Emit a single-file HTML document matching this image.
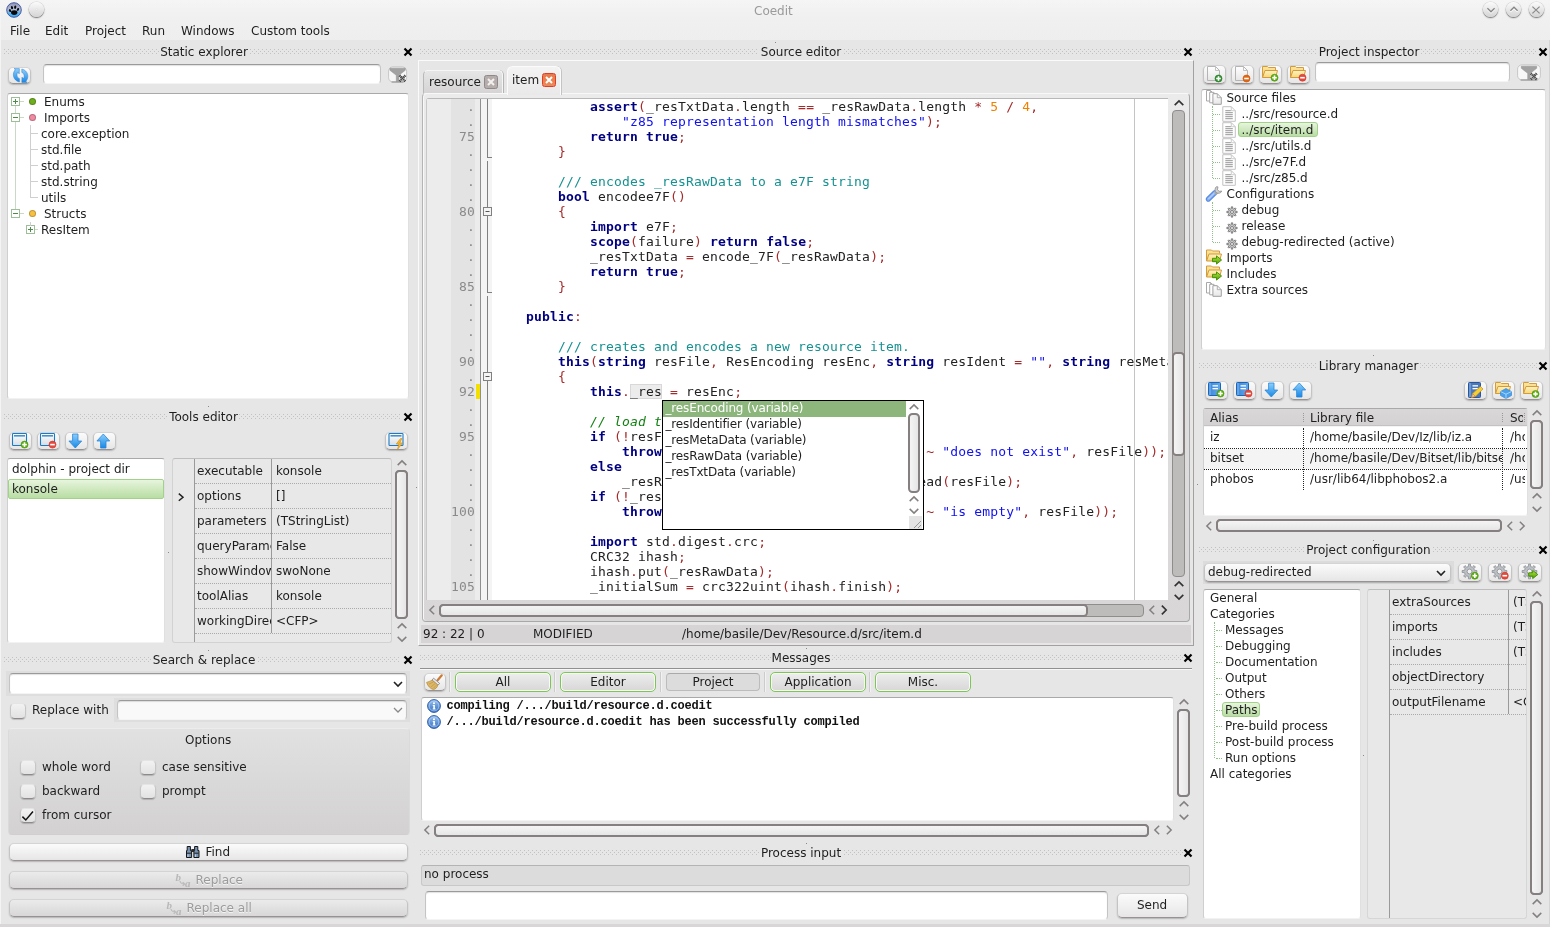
<!DOCTYPE html>
<html><head><meta charset="utf-8"><title>Coedit</title>
<style>
html,body{margin:0;padding:0}
body{width:1550px;height:927px;overflow:hidden;position:relative;background:#e6e6e6;font-family:"DejaVu Sans","Liberation Sans",sans-serif;font-size:12px;color:#1e1e1e;will-change:transform}
div,span,svg{position:absolute;box-sizing:border-box}
.t{white-space:pre;line-height:16px;height:16px}
.hd{height:16px;line-height:16px;text-align:center;white-space:pre}
.dots{height:5px;background:
 repeating-linear-gradient(90deg,#c2c2c2 0 1px,transparent 1px 4px) 0 0/100% 1px no-repeat,
 repeating-linear-gradient(90deg,#c2c2c2 0 1px,transparent 1px 4px) 2px 2px/100% 1px no-repeat,
 repeating-linear-gradient(90deg,#c2c2c2 0 1px,transparent 1px 4px) 0 4px/100% 1px no-repeat}
.white{background:#fff;border-top:1px solid #a9a9a9;border-left:1px solid #cfcfcf;border-right:1px solid #e0e0e0;border-bottom:1px solid #f2f2f2;border-radius:3px}
.inp{background:#fff;border:1px solid #c4c4c4;border-top-color:#9a9a9a;border-bottom-color:#f4f4f4;border-radius:4px;box-shadow:inset 0 1px 1px rgba(0,0,0,.12)}
.btn{border-radius:5px;background:linear-gradient(#fbfbfb,#e6e6e6);border:1px solid #c4c4c4;border-top-color:#d4d4d4;border-bottom-color:#989292;box-shadow:0 1px 1.5px rgba(0,0,0,.22)}
.sel{background:linear-gradient(#e7f5dd,#b8dda3);border:1px solid #a3d18c;border-radius:3px}
.code{font-family:"DejaVu Sans Mono","Liberation Mono",monospace;font-size:13px;letter-spacing:0.174px;white-space:pre;line-height:15px;height:15px}
.k{font-weight:bold;color:#000080}
.s{color:#a52a2a}
.n{color:#f08000}
.q{color:#1010f0}
.d{color:#169090}
.c{color:#108010;font-style:italic}
.i{color:#222}
.ln{font-family:"DejaVu Sans Mono","Liberation Mono",monospace;font-size:13px;letter-spacing:0.174px;color:#8a8a8a;text-align:right;line-height:15px;height:15px;white-space:pre}
.msg{font-family:"Liberation Mono",monospace;font-weight:bold;font-size:12px;letter-spacing:-0.2px;white-space:pre;line-height:16px;height:16px;color:#111}
.cb{border-radius:4.5px;background:linear-gradient(#f2f2f2,#e2e2e2);border:1px solid #c6c6c6;border-top-color:#e4e4e4;border-bottom-color:#8e8a8a;box-shadow:0 1px 1px rgba(0,0,0,.18)}
.sbt{background:#bebcbb;border:1px solid #908c8c;border-radius:4px}
.sbh{background:linear-gradient(90deg,#f4f4f4,#e6e6e6);border:2px solid #857f7f;border-radius:4.5px}
.sbhh{background:linear-gradient(#f4f4f4,#e6e6e6);border:2px solid #857f7f;border-radius:4.5px}
.dis{color:#9c9c9c;text-shadow:0 1px 0 #f4f4f4}
.btnd{background:linear-gradient(#ebebeb,#d9d7d7)}
</style></head>
<body>
<svg width="0" height="0" style="left:0;top:0"><defs>
<linearGradient id="gBlue" x1="0" y1="0" x2="0" y2="1"><stop offset="0" stop-color="#8fd0fb"/><stop offset="1" stop-color="#1787e6"/></linearGradient>
<linearGradient id="gFold" x1="0" y1="0" x2="0" y2="1"><stop offset="0" stop-color="#fbe7a2"/><stop offset="1" stop-color="#f3c95c"/></linearGradient>
<linearGradient id="gFoldF" x1="0" y1="0" x2="0" y2="1"><stop offset="0" stop-color="#fff3c4"/><stop offset="1" stop-color="#f7d774"/></linearGradient>
<linearGradient id="gWin" x1="0" y1="0" x2="0" y2="1"><stop offset="0" stop-color="#ffffff"/><stop offset="1" stop-color="#d8dde2"/></linearGradient>
<linearGradient id="gBook" x1="0" y1="0" x2="1" y2="0"><stop offset="0" stop-color="#3c86d8"/><stop offset="1" stop-color="#62a8ea"/></linearGradient>
<linearGradient id="gGreenA" x1="0" y1="0" x2="0" y2="1"><stop offset="0" stop-color="#b4e83c"/><stop offset="1" stop-color="#4e9a06"/></linearGradient>
<linearGradient id="gDoc" x1="0" y1="0" x2="0" y2="1"><stop offset="0" stop-color="#ffffff"/><stop offset="1" stop-color="#e6e6e6"/></linearGradient>
</defs></svg>
<div class="" style="left:0px;top:0px;width:1550px;height:40px;background:linear-gradient(#f5f5f5,#f0f0f0 45%,#eeeeee)"></div>
<div class="" style="left:0px;top:0px;width:1px;height:927px;background:#f4f4f4"></div>
<div class="" style="left:1549px;top:40px;width:1px;height:887px;background:#d4d4d4"></div>
<div class="t" style="left:754px;top:2.5px;color:#9a9a9a">Coedit</div>
<div class="" style="left:29.0px;top:2px;width:15.0px;height:15px;border-radius:50%;background:linear-gradient(#fbfbfb,#d4d4d4);box-shadow:0 1px 1.5px rgba(0,0,0,.5), 0 0 0 0.5px rgba(0,0,0,.12)"></div>
<div class="" style="left:1483.0px;top:2px;width:15.0px;height:15px;border-radius:50%;background:linear-gradient(#fbfbfb,#d4d4d4);box-shadow:0 1px 1.5px rgba(0,0,0,.5), 0 0 0 0.5px rgba(0,0,0,.12)"></div>
<div class="" style="left:1506.0px;top:2px;width:15.0px;height:15px;border-radius:50%;background:linear-gradient(#fbfbfb,#d4d4d4);box-shadow:0 1px 1.5px rgba(0,0,0,.5), 0 0 0 0.5px rgba(0,0,0,.12)"></div>
<div class="" style="left:1528.8px;top:2px;width:15.0px;height:15px;border-radius:50%;background:linear-gradient(#fbfbfb,#d4d4d4);box-shadow:0 1px 1.5px rgba(0,0,0,.5), 0 0 0 0.5px rgba(0,0,0,.12)"></div>
<svg style="left:1482.5px;top:1.8000000000000007px" width="16" height="16" viewBox="-8 -8 16 16"><path d="M-3.6 -1.8L0 1.8L3.6 -1.8" transform="translate(0,1)" stroke="#fff" stroke-width="1.3" fill="none"/><path d="M-3.6 -1.8L0 1.8L3.6 -1.8" stroke="#868686" stroke-width="1.3" fill="none"/></svg>
<svg style="left:1505.5px;top:0.9000000000000004px" width="16" height="16" viewBox="-8 -8 16 16"><path d="M-3.6 1.8L0 -1.8L3.6 1.8" transform="translate(0,1)" stroke="#fff" stroke-width="1.3" fill="none"/><path d="M-3.6 1.8L0 -1.8L3.6 1.8" stroke="#868686" stroke-width="1.3" fill="none"/></svg>
<svg style="left:1528.3px;top:1.5px" width="16" height="16" viewBox="-8 -8 16 16"><path d="M-3.6 -3.4L3.6 3.4M3.6 -3.4L-3.6 3.4" stroke="#8a8a8a" stroke-width="1.2" fill="none"/></svg>
<div class="" style="left:35.7px;top:8.9px;width:1.5999999999999943px;height:1.5999999999999996px;border-radius:50%;background:#fff;box-shadow:0 0 1px #999"></div>
<svg style="left:5.9px;top:1.7px" width="16" height="16" viewBox="0 0 16 16">
<defs><linearGradient id="pw" x1="0" y1="0" x2="0" y2="1"><stop offset="0" stop-color="#8f93b4"/><stop offset="0.45" stop-color="#b4bcd8"/><stop offset="0.75" stop-color="#58b4f0"/><stop offset="1" stop-color="#30b0fc"/></linearGradient></defs>
<circle cx="8" cy="8" r="7.3" fill="url(#pw)" stroke="#3a4f98" stroke-width="0.9"/>
<ellipse cx="8.2" cy="10.6" rx="3.2" ry="2.3" fill="#0a0a0a"/>
<ellipse cx="4" cy="8.6" rx="1.1" ry="1.5" fill="#0a0a0a" transform="rotate(-25 4 8.6)"/><ellipse cx="6" cy="5.6" rx="1.1" ry="1.7" fill="#0a0a0a" transform="rotate(-10 6 5.6)"/>
<ellipse cx="9.2" cy="5.2" rx="1.1" ry="1.7" fill="#0a0a0a" transform="rotate(8 9.2 5.2)"/><ellipse cx="12" cy="7.4" rx="1.1" ry="1.5" fill="#0a0a0a" transform="rotate(25 12 7.4)"/>
</svg>
<div class="t" style="left:10px;top:22.5px;">File</div>
<div class="t" style="left:45px;top:22.5px;">Edit</div>
<div class="t" style="left:85px;top:22.5px;">Project</div>
<div class="t" style="left:142px;top:22.5px;">Run</div>
<div class="t" style="left:181px;top:22.5px;">Windows</div>
<div class="t" style="left:251px;top:22.5px;">Custom tools</div>
<div class="dots" style="left:4px;top:49.0px;width:154.5px"></div>
<div class="dots" style="left:249.5px;top:49.0px;width:150.5px"></div>
<div class="hd" style="left:140.5px;width:127px;top:44.0px">Static explorer</div>
<svg style="left:403px;top:47.0px" width="10" height="10" viewBox="0 0 10 10"><path d="M1.5 1.5L8.5 8.5M8.5 1.5L1.5 8.5" stroke="#000" stroke-width="2.2" fill="none"/></svg>
<div class="btn" style="left:8px;top:67px;width:23px;height:17px;"></div>
<div class="inp" style="left:43px;top:64px;width:338px;height:20px;"></div>
<div class="white" style="left:7px;top:93px;width:402px;height:306px;"></div>
<div class="" style="left:15px;top:101.0px;width:9px;height:1.0px;background:#c9d9c6"></div>
<svg style="left:11px;top:97.0px" width="9" height="9" viewBox="0 0 9 9"><rect x="0.5" y="0.5" width="8" height="8" fill="#fff" stroke="#9cbf98"/><path d="M2 4.5H7M4.5 2V7" stroke="#4f8a4a" stroke-width="1"/></svg>
<div class="" style="left:29px;top:98.0px;width:7px;height:7.0px;border-radius:50%;background:#6fae1c;border:1px solid rgba(0,0,0,.22)"></div>
<div class="t" style="left:44px;top:93.5px;">Enums</div>
<div class="" style="left:15px;top:117.0px;width:9px;height:1.0px;background:#c9d9c6"></div>
<svg style="left:11px;top:113.0px" width="9" height="9" viewBox="0 0 9 9"><rect x="0.5" y="0.5" width="8" height="8" fill="#fff" stroke="#9cbf98"/><path d="M2 4.5H7" stroke="#4f8a4a" stroke-width="1"/></svg>
<div class="" style="left:29px;top:114.0px;width:7px;height:7.0px;border-radius:50%;background:#f08aa0;border:1px solid rgba(0,0,0,.22)"></div>
<div class="t" style="left:44px;top:109.5px;">Imports</div>
<div class="" style="left:30px;top:133.0px;width:8px;height:1.0px;background:#cfcfcf"></div>
<div class="t" style="left:41px;top:125.5px;">core.exception</div>
<div class="" style="left:30px;top:149.0px;width:8px;height:1.0px;background:#cfcfcf"></div>
<div class="t" style="left:41px;top:141.5px;">std.file</div>
<div class="" style="left:30px;top:165.0px;width:8px;height:1.0px;background:#cfcfcf"></div>
<div class="t" style="left:41px;top:157.5px;">std.path</div>
<div class="" style="left:30px;top:181.0px;width:8px;height:1.0px;background:#cfcfcf"></div>
<div class="t" style="left:41px;top:173.5px;">std.string</div>
<div class="" style="left:30px;top:197.0px;width:8px;height:1.0px;background:#cfcfcf"></div>
<div class="t" style="left:41px;top:189.5px;">utils</div>
<div class="" style="left:15px;top:213.0px;width:9px;height:1.0px;background:#c9d9c6"></div>
<svg style="left:11px;top:209.0px" width="9" height="9" viewBox="0 0 9 9"><rect x="0.5" y="0.5" width="8" height="8" fill="#fff" stroke="#9cbf98"/><path d="M2 4.5H7" stroke="#4f8a4a" stroke-width="1"/></svg>
<div class="" style="left:29px;top:210.0px;width:7px;height:7.0px;border-radius:50%;background:#f8c040;border:1px solid rgba(0,0,0,.22)"></div>
<div class="t" style="left:44px;top:205.5px;">Structs</div>
<div class="" style="left:30px;top:229.0px;width:8px;height:1.0px;background:#c9d9c6"></div>
<svg style="left:26px;top:225.0px" width="9" height="9" viewBox="0 0 9 9"><rect x="0.5" y="0.5" width="8" height="8" fill="#fff" stroke="#9cbf98"/><path d="M2 4.5H7M4.5 2V7" stroke="#4f8a4a" stroke-width="1"/></svg>
<div class="t" style="left:41px;top:221.5px;">ResItem</div>
<div class="" style="left:15px;top:106px;width:1px;height:7px;background:#c9d9c6"></div>
<div class="" style="left:15px;top:122px;width:1px;height:87px;background:#c9d9c6"></div>
<div class="" style="left:30px;top:125px;width:1px;height:73px;background:#cfcfcf"></div>
<div class="" style="left:30px;top:222px;width:1px;height:4px;background:#cfcfcf"></div>
<div class="dots" style="left:4px;top:414.0px;width:164.0px"></div>
<div class="dots" style="left:239.0px;top:414.0px;width:161.0px"></div>
<div class="hd" style="left:150.0px;width:107px;top:409.0px">Tools editor</div>
<svg style="left:403px;top:412.0px" width="10" height="10" viewBox="0 0 10 10"><path d="M1.5 1.5L8.5 8.5M8.5 1.5L1.5 8.5" stroke="#000" stroke-width="2.2" fill="none"/></svg>
<div class="btn" style="left:8.5px;top:431.5px;width:23.0px;height:18.5px;"></div>
<div class="btn" style="left:36.5px;top:431.5px;width:23.0px;height:18.5px;"></div>
<div class="btn" style="left:64.5px;top:431.5px;width:23.0px;height:18.5px;"></div>
<div class="btn" style="left:92.5px;top:431.5px;width:23.0px;height:18.5px;"></div>
<div class="btn" style="left:384.5px;top:431.5px;width:23.0px;height:18.5px;"></div>
<div class="white" style="left:7px;top:458px;width:158px;height:185px;"></div>
<div class="t" style="left:12px;top:460.5px;">dolphin - project dir</div>
<div class="sel" style="left:8px;top:479px;width:156px;height:20px;border-radius:2px"></div>
<div class="t" style="left:12px;top:480.5px;">konsole</div>
<div class="" style="left:172px;top:458px;width:220px;height:185px;border:1px solid #d2d2d2;border-top-color:#bdbdbd;border-radius:3px;background:#e8e8e8"></div>
<div class="" style="left:194px;top:459px;width:1px;height:183px;background:#9a9a9a"></div>
<div class="" style="left:271px;top:459px;width:1px;height:174px;background:#9a9a9a"></div>
<div class="" style="left:195px;top:459px;width:76px;height:23px;overflow:hidden"><div class="t" style="left:2px;top:3.5px">executable</div></div>
<div class="t" style="left:276px;top:462.5px;">konsole</div>
<div class="" style="left:195px;top:482.5px;width:196px;height:1.0px;border-top:1px dotted #aaa"></div>
<div class="" style="left:195px;top:484px;width:76px;height:23px;overflow:hidden"><div class="t" style="left:2px;top:3.5px">options</div></div>
<div class="t" style="left:276px;top:487.5px;">[]</div>
<div class="" style="left:195px;top:507.5px;width:196px;height:1.0px;border-top:1px dotted #aaa"></div>
<div class="" style="left:195px;top:509px;width:76px;height:23px;overflow:hidden"><div class="t" style="left:2px;top:3.5px">parameters</div></div>
<div class="t" style="left:276px;top:512.5px;">(TStringList)</div>
<div class="" style="left:195px;top:532.5px;width:196px;height:1.0px;border-top:1px dotted #aaa"></div>
<div class="" style="left:195px;top:534px;width:76px;height:23px;overflow:hidden"><div class="t" style="left:2px;top:3.5px">queryParameters</div></div>
<div class="t" style="left:276px;top:537.5px;">False</div>
<div class="" style="left:195px;top:557.5px;width:196px;height:1.0px;border-top:1px dotted #aaa"></div>
<div class="" style="left:195px;top:559px;width:76px;height:23px;overflow:hidden"><div class="t" style="left:2px;top:3.5px">showWindow</div></div>
<div class="t" style="left:276px;top:562.5px;">swoNone</div>
<div class="" style="left:195px;top:582.5px;width:196px;height:1.0px;border-top:1px dotted #aaa"></div>
<div class="" style="left:195px;top:584px;width:76px;height:23px;overflow:hidden"><div class="t" style="left:2px;top:3.5px">toolAlias</div></div>
<div class="t" style="left:276px;top:587.5px;">konsole</div>
<div class="" style="left:195px;top:607.5px;width:196px;height:1.0px;border-top:1px dotted #aaa"></div>
<div class="" style="left:195px;top:609px;width:76px;height:23px;overflow:hidden"><div class="t" style="left:2px;top:3.5px">workingDirectory</div></div>
<div class="t" style="left:276px;top:612.5px;">&lt;CFP&gt;</div>
<div class="" style="left:195px;top:632.5px;width:196px;height:1.0px;border-top:1px dotted #aaa"></div>
<svg style="left:176px;top:491px" width="10" height="12" viewBox="0 0 10 12"><path d="M2.8 2.6L7 6.2L2.8 9.8" stroke="#222" stroke-width="1.5" fill="none"/></svg>
<svg style="left:393.5px;top:455px" width="16" height="16" viewBox="-8 -8 16 16"><path d="M-4.3 2.15L0 -2.15L4.3 2.15" stroke="#858080" stroke-width="1.5" fill="none"/></svg>
<svg style="left:393.5px;top:618px" width="16" height="16" viewBox="-8 -8 16 16"><path d="M-4.3 2.15L0 -2.15L4.3 2.15" stroke="#858080" stroke-width="1.5" fill="none"/></svg>
<svg style="left:393.5px;top:630.5px" width="16" height="16" viewBox="-8 -8 16 16"><path d="M-4.3 -2.15L0 2.15L4.3 -2.15" stroke="#858080" stroke-width="1.5" fill="none"/></svg>
<div class="sbt" style="left:395px;top:470px;width:13px;height:149px;"></div>
<div class="sbh" style="left:395px;top:470px;width:13px;height:149px;"></div>
<div class="dots" style="left:4px;top:657.0px;width:146.5px"></div>
<div class="dots" style="left:257.5px;top:657.0px;width:142.5px"></div>
<div class="hd" style="left:132.5px;width:143px;top:652.0px">Search &amp; replace</div>
<svg style="left:403px;top:655.0px" width="10" height="10" viewBox="0 0 10 10"><path d="M1.5 1.5L8.5 8.5M8.5 1.5L1.5 8.5" stroke="#000" stroke-width="2.2" fill="none"/></svg>
<div class="" style="left:6px;top:671px;width:404px;height:25px;background:#dedede"></div>
<div class="" style="left:114px;top:698px;width:296px;height:24px;background:#dedede"></div>
<div class="inp" style="left:9px;top:673px;width:398px;height:21px;"></div>
<svg style="left:390px;top:676px" width="16" height="16" viewBox="-8 -8 16 16"><path d="M-4 -2.0L0 2.0L4 -2.0" stroke="#222" stroke-width="1.6" fill="none"/></svg>
<div class="cb" style="left:9.5px;top:703px;width:16.0px;height:15.5px;"></div>
<div class="t" style="left:32px;top:702.0px;">Replace with</div>
<div class="inp" style="left:117px;top:700px;width:290px;height:20px;background:#f9f9f9"></div>
<svg style="left:390px;top:702px" width="16" height="16" viewBox="-8 -8 16 16"><path d="M-4 -2.0L0 2.0L4 -2.0" stroke="#888" stroke-width="1.3" fill="none"/></svg>
<div class="" style="left:7.5px;top:727.5px;width:402.0px;height:107.5px;background:linear-gradient(#e1e1e1,#d3d1d1);border:1px solid #dadada;border-top-color:#ececec;border-bottom-color:#d0cece;border-radius:4px"></div>
<div class="t" style="left:185px;top:732.0px;">Options</div>
<div class="cb" style="left:19.5px;top:760px;width:16.0px;height:15.299999999999955px;"></div>
<div class="t" style="left:42px;top:758.5px;">whole word</div>
<div class="cb" style="left:19.5px;top:784px;width:16.0px;height:15.299999999999955px;"></div>
<div class="t" style="left:42px;top:782.5px;">backward</div>
<div class="cb" style="left:19.5px;top:808px;width:16.0px;height:15.299999999999955px;"></div>
<div class="t" style="left:42px;top:806.5px;">from cursor</div>
<svg style="left:19px;top:806.5px" width="17" height="17" viewBox="0 0 17 17"><path d="M3.4 9.6L6.8 13L14 4.6" stroke="#111" stroke-width="1.5" fill="none"/></svg>
<div class="cb" style="left:139.5px;top:760px;width:16.0px;height:15.299999999999955px;"></div>
<div class="t" style="left:162px;top:758.5px;">case sensitive</div>
<div class="cb" style="left:139.5px;top:784px;width:16.0px;height:15.299999999999955px;"></div>
<div class="t" style="left:162px;top:782.5px;">prompt</div>
<div class="btn" style="left:9px;top:843px;width:399px;height:18px;"></div>
<div class="btn btnd" style="left:9px;top:871px;width:399px;height:18px;"></div>
<div class="btn btnd" style="left:9px;top:899px;width:399px;height:18px;"></div>
<div class="t" style="left:205.5px;top:844.0px;">Find</div>
<div class="t dis" style="left:195.5px;top:872.0px;">Replace</div>
<div class="t dis" style="left:186.5px;top:900.0px;">Replace all</div>
<div class="dots" style="left:420px;top:49.0px;width:338.0px"></div>
<div class="dots" style="left:844.0px;top:49.0px;width:339.0px"></div>
<div class="hd" style="left:740.0px;width:122px;top:44.0px">Source editor</div>
<svg style="left:1183px;top:47.0px" width="10" height="10" viewBox="0 0 10 10"><path d="M1.5 1.5L8.5 8.5M8.5 1.5L1.5 8.5" stroke="#000" stroke-width="2.2" fill="none"/></svg>
<div class="" style="left:418px;top:60px;width:776px;height:586px;border:1px solid #a4a0a0;border-top-color:#fafafa;border-left-color:#fafafa"></div>
<div class="" style="left:422.5px;top:70px;width:80.5px;height:24px;background:linear-gradient(#e6e6e6,#d5d3d3);border:1px solid #f6f6f6;border-left-color:#b8b8b8;border-bottom:none;border-radius:5px 5px 0 0;box-shadow:1px 0 0 #b4b4b4"></div>
<div class="t" style="left:429px;top:73.5px;">resource</div>
<div class="" style="left:484px;top:75px;width:14px;height:14px;background:#b5adab;border:1px solid #90888a;border-radius:2.5px"></div>
<svg style="left:484px;top:75px" width="14" height="14" viewBox="0 0 14 14"><path d="M4 4L10 10M10 4L4 10" stroke="#f4f0f0" stroke-width="2" fill="none"/></svg>
<div class="" style="left:422px;top:93px;width:768px;height:529px;border:1px solid #a8a8a8;border-top-color:#f8f8f8;border-left-color:#b4b4b4;border-radius:4px;background:linear-gradient(#ebebeb,#d8d6d6);box-shadow:inset 1px 0 0 #f8f8f8"></div>
<div class="" style="left:506.5px;top:65.5px;width:54.5px;height:29.5px;background:linear-gradient(#f3f3f3,#e9e9e9);border:1.5px solid #fbfbfb;border-bottom:none;border-radius:5.5px 5.5px 0 0;box-shadow:1px 0 0 #c4c4c4"></div>
<div class="t" style="left:512px;top:71.5px;">item</div>
<div class="" style="left:542px;top:73px;width:14px;height:14px;background:linear-gradient(#e67a4c,#ea8a5a);border:1.3px solid #e03c26;border-radius:2.5px"></div>
<svg style="left:542px;top:73px" width="14" height="14" viewBox="0 0 14 14"><path d="M4 4L10 10M10 4L4 10" stroke="#fff" stroke-width="2" fill="none"/></svg>
<div class="" style="left:426px;top:98px;width:742px;height:502px;background:#fff;border-top:1px solid #b8b8b8;border-left:1px solid #c8c8c8;border-radius:3px 0 0 0;overflow:hidden"></div>
<div class="" style="left:427px;top:99px;width:54px;height:501px;background:#ececec"></div>
<div class="" style="left:451px;top:99px;width:24px;height:501px;background:#e3e3e3"></div>
<div class="" style="left:480px;top:99px;width:1px;height:501px;background:#909090"></div>
<div class="" style="left:481px;top:99px;width:11px;height:501px;background:#f4f4f4"></div>
<div class="" style="left:1134px;top:99px;width:1px;height:501px;background:#c4c4c4"></div>
<div class="" style="left:630px;top:384px;width:32px;height:15px;background:#ececec;border:1px solid #d8d8d8"></div>
<div class="" style="left:476px;top:384px;width:4px;height:15px;background:#f4e000"></div>
<div style="left:494px;top:99px;width:674px;height:501px;overflow:hidden">
<div class="code" style="left:0;top:0px">            <span class="k" style="position:static">assert</span><span class="s" style="position:static">(</span><span class="i" style="position:static">_resTxtData</span><span class="s" style="position:static">.</span><span class="i" style="position:static">length</span> <span class="s" style="position:static">=</span><span class="s" style="position:static">=</span> <span class="i" style="position:static">_resRawData</span><span class="s" style="position:static">.</span><span class="i" style="position:static">length</span> <span class="s" style="position:static">*</span> <span class="n" style="position:static">5</span> <span class="s" style="position:static">/</span> <span class="n" style="position:static">4</span><span class="s" style="position:static">,</span></div>
<div class="code" style="left:0;top:15px">                <span class="q" style="position:static">"z85 representation length mismatches"</span><span class="s" style="position:static">)</span><span class="s" style="position:static">;</span></div>
<div class="code" style="left:0;top:30px">            <span class="k" style="position:static">return</span> <span class="k" style="position:static">true</span><span class="s" style="position:static">;</span></div>
<div class="code" style="left:0;top:45px">        <span class="s" style="position:static">}</span></div>
<div class="code" style="left:0;top:60px"></div>
<div class="code" style="left:0;top:75px">        <span class="d" style="position:static">/// encodes _resRawData to a e7F string</span></div>
<div class="code" style="left:0;top:90px">        <span class="k" style="position:static">bool</span> <span class="i" style="position:static">encodee7F</span><span class="s" style="position:static">(</span><span class="s" style="position:static">)</span></div>
<div class="code" style="left:0;top:105px">        <span class="s" style="position:static">{</span></div>
<div class="code" style="left:0;top:120px">            <span class="k" style="position:static">import</span> <span class="i" style="position:static">e7F</span><span class="s" style="position:static">;</span></div>
<div class="code" style="left:0;top:135px">            <span class="k" style="position:static">scope</span><span class="s" style="position:static">(</span><span class="i" style="position:static">failure</span><span class="s" style="position:static">)</span> <span class="k" style="position:static">return</span> <span class="k" style="position:static">false</span><span class="s" style="position:static">;</span></div>
<div class="code" style="left:0;top:150px">            <span class="i" style="position:static">_resTxtData</span> <span class="s" style="position:static">=</span> <span class="i" style="position:static">encode_7F</span><span class="s" style="position:static">(</span><span class="i" style="position:static">_resRawData</span><span class="s" style="position:static">)</span><span class="s" style="position:static">;</span></div>
<div class="code" style="left:0;top:165px">            <span class="k" style="position:static">return</span> <span class="k" style="position:static">true</span><span class="s" style="position:static">;</span></div>
<div class="code" style="left:0;top:180px">        <span class="s" style="position:static">}</span></div>
<div class="code" style="left:0;top:195px"></div>
<div class="code" style="left:0;top:210px">    <span class="k" style="position:static">public</span><span class="s" style="position:static">:</span></div>
<div class="code" style="left:0;top:225px"></div>
<div class="code" style="left:0;top:240px">        <span class="d" style="position:static">/// creates and encodes a new resource item.</span></div>
<div class="code" style="left:0;top:255px">        <span class="k" style="position:static">this</span><span class="s" style="position:static">(</span><span class="k" style="position:static">string</span> <span class="i" style="position:static">resFile</span><span class="s" style="position:static">,</span> <span class="i" style="position:static">ResEncoding</span> <span class="i" style="position:static">resEnc</span><span class="s" style="position:static">,</span> <span class="k" style="position:static">string</span> <span class="i" style="position:static">resIdent</span> <span class="s" style="position:static">=</span> <span class="q" style="position:static">""</span><span class="s" style="position:static">,</span> <span class="k" style="position:static">string</span> <span class="i" style="position:static">resMetaData</span> <span class="s" style="position:static">=</span> <span class="q" style="position:static">""</span><span class="s" style="position:static">)</span></div>
<div class="code" style="left:0;top:270px">        <span class="s" style="position:static">{</span></div>
<div class="code" style="left:0;top:285px">            <span class="k" style="position:static">this</span><span class="s" style="position:static">.</span><span class="i" style="position:static">_res</span> <span class="s" style="position:static">=</span> <span class="i" style="position:static">resEnc</span><span class="s" style="position:static">;</span></div>
<div class="code" style="left:0;top:300px"></div>
<div class="code" style="left:0;top:315px">            <span class="c" style="position:static">// load the raw data</span></div>
<div class="code" style="left:0;top:330px">            <span class="k" style="position:static">if</span> <span class="s" style="position:static">(</span><span class="s" style="position:static">!</span><span class="i" style="position:static">resFile</span><span class="s" style="position:static">.</span><span class="i" style="position:static">exists</span><span class="s" style="position:static">)</span></div>
<div class="code" style="left:0;top:345px">                <span class="k" style="position:static">throw</span> <span class="k" style="position:static">new</span> <span class="i" style="position:static">Exception</span><span class="s" style="position:static">(</span><span class="i" style="position:static">format</span><span class="s" style="position:static">(</span><span class="q" style="position:static">"file %s "</span> <span class="s" style="position:static">~</span> <span class="q" style="position:static">"does not exist"</span><span class="s" style="position:static">,</span> <span class="i" style="position:static">resFile</span><span class="s" style="position:static">)</span><span class="s" style="position:static">)</span><span class="s" style="position:static">;</span></div>
<div class="code" style="left:0;top:360px">            <span class="k" style="position:static">else</span></div>
<div class="code" style="left:0;top:375px">                <span class="i" style="position:static">_resRawData</span> <span class="s" style="position:static">=</span> <span class="k" style="position:static">cast</span><span class="s" style="position:static">(</span><span class="k" style="position:static">ubyte</span><span class="s" style="position:static">[</span><span class="s" style="position:static">]</span><span class="s" style="position:static">)</span><span class="i" style="position:static">std</span><span class="s" style="position:static">.</span><span class="i" style="position:static">file</span><span class="s" style="position:static">.</span><span class="i" style="position:static">read</span><span class="s" style="position:static">(</span><span class="i" style="position:static">resFile</span><span class="s" style="position:static">)</span><span class="s" style="position:static">;</span></div>
<div class="code" style="left:0;top:390px">            <span class="k" style="position:static">if</span> <span class="s" style="position:static">(</span><span class="s" style="position:static">!</span><span class="i" style="position:static">_resRawData</span><span class="s" style="position:static">.</span><span class="i" style="position:static">length</span><span class="s" style="position:static">)</span></div>
<div class="code" style="left:0;top:405px">                <span class="k" style="position:static">throw</span> <span class="k" style="position:static">new</span> <span class="i" style="position:static">Exception</span><span class="s" style="position:static">(</span><span class="i" style="position:static">format</span><span class="s" style="position:static">(</span><span class="q" style="position:static">"file %s "</span> <span class="s" style="position:static">~</span> <span class="q" style="position:static">"is empty"</span><span class="s" style="position:static">,</span> <span class="i" style="position:static">resFile</span><span class="s" style="position:static">)</span><span class="s" style="position:static">)</span><span class="s" style="position:static">;</span></div>
<div class="code" style="left:0;top:420px"></div>
<div class="code" style="left:0;top:435px">            <span class="k" style="position:static">import</span> <span class="i" style="position:static">std</span><span class="s" style="position:static">.</span><span class="i" style="position:static">digest</span><span class="s" style="position:static">.</span><span class="i" style="position:static">crc</span><span class="s" style="position:static">;</span></div>
<div class="code" style="left:0;top:450px">            <span class="i" style="position:static">CRC32</span> <span class="i" style="position:static">ihash</span><span class="s" style="position:static">;</span></div>
<div class="code" style="left:0;top:465px">            <span class="i" style="position:static">ihash</span><span class="s" style="position:static">.</span><span class="i" style="position:static">put</span><span class="s" style="position:static">(</span><span class="i" style="position:static">_resRawData</span><span class="s" style="position:static">)</span><span class="s" style="position:static">;</span></div>
<div class="code" style="left:0;top:480px">            <span class="i" style="position:static">_initialSum</span> <span class="s" style="position:static">=</span> <span class="i" style="position:static">crc322uint</span><span class="s" style="position:static">(</span><span class="i" style="position:static">ihash</span><span class="s" style="position:static">.</span><span class="i" style="position:static">finish</span><span class="s" style="position:static">)</span><span class="s" style="position:static">;</span></div>
</div>
<div class="ln" style="left:440px;width:35px;top:99px">.</div>
<div class="ln" style="left:440px;width:35px;top:114px">.</div>
<div class="ln" style="left:440px;width:35px;top:129px">75</div>
<div class="ln" style="left:440px;width:35px;top:144px">.</div>
<div class="ln" style="left:440px;width:35px;top:159px">.</div>
<div class="ln" style="left:440px;width:35px;top:174px">.</div>
<div class="ln" style="left:440px;width:35px;top:189px">.</div>
<div class="ln" style="left:440px;width:35px;top:204px">80</div>
<div class="ln" style="left:440px;width:35px;top:219px">.</div>
<div class="ln" style="left:440px;width:35px;top:234px">.</div>
<div class="ln" style="left:440px;width:35px;top:249px">.</div>
<div class="ln" style="left:440px;width:35px;top:264px">.</div>
<div class="ln" style="left:440px;width:35px;top:279px">85</div>
<div class="ln" style="left:440px;width:35px;top:294px">.</div>
<div class="ln" style="left:440px;width:35px;top:309px">.</div>
<div class="ln" style="left:440px;width:35px;top:324px">.</div>
<div class="ln" style="left:440px;width:35px;top:339px">.</div>
<div class="ln" style="left:440px;width:35px;top:354px">90</div>
<div class="ln" style="left:440px;width:35px;top:369px">.</div>
<div class="ln" style="left:440px;width:35px;top:384px">92</div>
<div class="ln" style="left:440px;width:35px;top:399px">.</div>
<div class="ln" style="left:440px;width:35px;top:414px">.</div>
<div class="ln" style="left:440px;width:35px;top:429px">95</div>
<div class="ln" style="left:440px;width:35px;top:444px">.</div>
<div class="ln" style="left:440px;width:35px;top:459px">.</div>
<div class="ln" style="left:440px;width:35px;top:474px">.</div>
<div class="ln" style="left:440px;width:35px;top:489px">.</div>
<div class="ln" style="left:440px;width:35px;top:504px">100</div>
<div class="ln" style="left:440px;width:35px;top:519px">.</div>
<div class="ln" style="left:440px;width:35px;top:534px">.</div>
<div class="ln" style="left:440px;width:35px;top:549px">.</div>
<div class="ln" style="left:440px;width:35px;top:564px">.</div>
<div class="ln" style="left:440px;width:35px;top:579px">105</div>
<div class="" style="left:487px;top:99px;width:1px;height:59px;background:#808080"></div>
<div class="" style="left:487px;top:157px;width:5px;height:1px;background:#808080"></div>
<div class="" style="left:487px;top:161px;width:1px;height:132px;background:#808080"></div>
<div class="" style="left:487px;top:292px;width:5px;height:1px;background:#808080"></div>
<div class="" style="left:487px;top:296px;width:1px;height:304px;background:#808080"></div>
<svg style="left:483px;top:206.5px" width="10" height="10" viewBox="0 0 10 10"><rect x="0.5" y="0.5" width="8" height="8" fill="#f4f4f4" stroke="#808080"/><path d="M2.5 4.5H6.5" stroke="#555"/></svg>
<svg style="left:483px;top:371.5px" width="10" height="10" viewBox="0 0 10 10"><rect x="0.5" y="0.5" width="8" height="8" fill="#f4f4f4" stroke="#808080"/><path d="M2.5 4.5H6.5" stroke="#555"/></svg>
<svg style="left:1170.5px;top:95px" width="16" height="16" viewBox="-8 -8 16 16"><path d="M-4.3 2.15L0 -2.15L4.3 2.15" stroke="#333" stroke-width="1.65" fill="none"/></svg>
<svg style="left:1170.5px;top:576px" width="16" height="16" viewBox="-8 -8 16 16"><path d="M-4.3 2.15L0 -2.15L4.3 2.15" stroke="#333" stroke-width="1.65" fill="none"/></svg>
<svg style="left:1170.5px;top:588.5px" width="16" height="16" viewBox="-8 -8 16 16"><path d="M-4.3 -2.15L0 2.15L4.3 -2.15" stroke="#333" stroke-width="1.65" fill="none"/></svg>
<div class="sbt" style="left:1172px;top:110px;width:13px;height:467px;"></div>
<div class="sbh" style="left:1172px;top:352px;width:13px;height:104px;"></div>
<svg style="left:424px;top:602.0px" width="16" height="16" viewBox="-8 -8 16 16"><path d="M2.15 -4.3L-2.15 0L2.15 4.3" stroke="#858080" stroke-width="1.5" fill="none"/></svg>
<svg style="left:1143.5px;top:602.0px" width="16" height="16" viewBox="-8 -8 16 16"><path d="M2.15 -4.3L-2.15 0L2.15 4.3" stroke="#858080" stroke-width="1.5" fill="none"/></svg>
<svg style="left:1155.5px;top:602.0px" width="16" height="16" viewBox="-8 -8 16 16"><path d="M-2.15 -4.3L2.15 0L-2.15 4.3" stroke="#333" stroke-width="1.65" fill="none"/></svg>
<div class="sbt" style="left:439px;top:603.5px;width:705px;height:13.0px;"></div>
<div class="sbhh" style="left:439px;top:603.5px;width:649px;height:13.0px;"></div>
<div class="" style="left:421px;top:625px;width:770px;height:18px;background:#d6d4d4"></div>
<div class="t" style="left:423px;top:625.5px;">92 : 22 | 0</div>
<div class="t" style="left:533px;top:625.5px;">MODIFIED</div>
<div class="t" style="left:682px;top:625.5px;">/home/basile/Dev/Resource.d/src/item.d</div>
<div class="" style="left:662px;top:400px;width:262px;height:130px;background:#fff;border:1px solid #000"></div>
<div class="" style="left:663px;top:401px;width:243px;height:16px;background:#8cb67b"></div>
<div class="t" style="left:665.5px;top:400.0px;letter-spacing:-0.15px;color:#fff">_resEncoding (variable)</div>
<div class="t" style="left:665.5px;top:416.0px;letter-spacing:-0.15px;">_resIdentifier (variable)</div>
<div class="t" style="left:665.5px;top:432.0px;letter-spacing:-0.15px;">_resMetaData (variable)</div>
<div class="t" style="left:665.5px;top:448.0px;letter-spacing:-0.15px;">_resRawData (variable)</div>
<div class="t" style="left:665.5px;top:464.0px;letter-spacing:-0.15px;">_resTxtData (variable)</div>
<svg style="left:906px;top:399px" width="16" height="16" viewBox="-8 -8 16 16"><path d="M-4.3 2.15L0 -2.15L4.3 2.15" stroke="#858080" stroke-width="1.5" fill="none"/></svg>
<div class="sbh" style="left:908px;top:413px;width:12px;height:80px;"></div>
<svg style="left:906px;top:491px" width="16" height="16" viewBox="-8 -8 16 16"><path d="M-4.3 2.15L0 -2.15L4.3 2.15" stroke="#858080" stroke-width="1.5" fill="none"/></svg>
<svg style="left:906px;top:503px" width="16" height="16" viewBox="-8 -8 16 16"><path d="M-4.3 -2.15L0 2.15L4.3 -2.15" stroke="#858080" stroke-width="1.5" fill="none"/></svg>
<svg style="left:909px;top:516px" width="13" height="13" viewBox="0 0 13 13"><rect width="13" height="13" fill="#e4e4e4"/><path d="M12 5L5 12M12 9L9 12" stroke="#999"/></svg>
<div class="dots" style="left:420px;top:655.0px;width:350.5px"></div>
<div class="dots" style="left:831.5px;top:655.0px;width:351.5px"></div>
<div class="hd" style="left:752.5px;width:97px;top:650.0px">Messages</div>
<svg style="left:1183px;top:653.0px" width="10" height="10" viewBox="0 0 10 10"><path d="M1.5 1.5L8.5 8.5M8.5 1.5L1.5 8.5" stroke="#000" stroke-width="2.2" fill="none"/></svg>
<div class="" style="left:420px;top:668px;width:772px;height:1px;background:#909090"></div>
<div class="" style="left:420px;top:669px;width:772px;height:1px;background:#f8f8f8"></div>
<div class="btn" style="left:424px;top:672.5px;width:21.5px;height:18.5px;"></div>
<div class="" style="left:454.7px;top:671.7px;width:96.59999999999997px;height:20.59999999999991px;border:1.4px solid #7ac852;border-radius:5px;background:linear-gradient(#eeeeee,#d8d6d6);box-shadow:inset 0 0 0 1px #fafafa"></div>
<div class="hd" style="left:455px;width:96px;top:673.5px">All</div>
<div class="" style="left:559.7px;top:671.7px;width:96.59999999999991px;height:20.59999999999991px;border:1.4px solid #7ac852;border-radius:5px;background:linear-gradient(#eeeeee,#d8d6d6);box-shadow:inset 0 0 0 1px #fafafa"></div>
<div class="hd" style="left:560px;width:96px;top:673.5px">Editor</div>
<div class="" style="left:666px;top:673px;width:94px;height:18px;border:1px solid #bcbcbc;border-top-color:#aaa;border-radius:4px;background:#dcdcdc"></div>
<div class="hd" style="left:666px;width:94px;top:673.5px">Project</div>
<div class="" style="left:769.7px;top:671.7px;width:96.59999999999991px;height:20.59999999999991px;border:1.4px solid #7ac852;border-radius:5px;background:linear-gradient(#eeeeee,#d8d6d6);box-shadow:inset 0 0 0 1px #fafafa"></div>
<div class="hd" style="left:770px;width:96px;top:673.5px">Application</div>
<div class="" style="left:874.7px;top:671.7px;width:96.59999999999991px;height:20.59999999999991px;border:1.4px solid #7ac852;border-radius:5px;background:linear-gradient(#eeeeee,#d8d6d6);box-shadow:inset 0 0 0 1px #fafafa"></div>
<div class="hd" style="left:875px;width:96px;top:673.5px">Misc.</div>
<div class="" style="left:449px;top:672px;width:1px;height:20px;background:#cccccc"></div>
<div class="" style="left:450px;top:672px;width:1px;height:20px;background:#f2f2f2"></div>
<div class="" style="left:554px;top:672px;width:1px;height:20px;background:#cccccc"></div>
<div class="" style="left:555px;top:672px;width:1px;height:20px;background:#f2f2f2"></div>
<div class="" style="left:659.5px;top:672px;width:1.0px;height:20px;background:#cccccc"></div>
<div class="" style="left:660.5px;top:672px;width:1.0px;height:20px;background:#f2f2f2"></div>
<div class="" style="left:764px;top:672px;width:1px;height:20px;background:#cccccc"></div>
<div class="" style="left:765px;top:672px;width:1px;height:20px;background:#f2f2f2"></div>
<div class="" style="left:869px;top:672px;width:1px;height:20px;background:#cccccc"></div>
<div class="" style="left:870px;top:672px;width:1px;height:20px;background:#f2f2f2"></div>
<div class="white" style="left:421px;top:697px;width:753px;height:124px;"></div>
<svg style="left:427px;top:699px" width="14" height="14" viewBox="0 0 14 14"><defs><linearGradient id="ig" x1="0" y1="0" x2="0" y2="1"><stop offset="0" stop-color="#9cc4f0"/><stop offset="1" stop-color="#2f6cc0"/></linearGradient></defs><circle cx="7" cy="7" r="6.4" fill="url(#ig)" stroke="#2f5fae" stroke-width="1"/><circle cx="7" cy="7" r="4.9" fill="none" stroke="#b9d3f2" stroke-width="0.7"/><path d="M5.8 6H7.9V9.6H8.6V10.6H5.6V9.6H6.3V7H5.8Z" fill="#fff"/><circle cx="7" cy="4.2" r="1.05" fill="#fff"/></svg>
<svg style="left:427px;top:715px" width="14" height="14" viewBox="0 0 14 14"><defs><linearGradient id="ig" x1="0" y1="0" x2="0" y2="1"><stop offset="0" stop-color="#9cc4f0"/><stop offset="1" stop-color="#2f6cc0"/></linearGradient></defs><circle cx="7" cy="7" r="6.4" fill="url(#ig)" stroke="#2f5fae" stroke-width="1"/><circle cx="7" cy="7" r="4.9" fill="none" stroke="#b9d3f2" stroke-width="0.7"/><path d="M5.8 6H7.9V9.6H8.6V10.6H5.6V9.6H6.3V7H5.8Z" fill="#fff"/><circle cx="7" cy="4.2" r="1.05" fill="#fff"/></svg>
<div class="msg" style="left:446.5px;top:697.5px;">compiling /.../build/resource.d.coedit</div>
<div class="msg" style="left:446.5px;top:713.5px;">/.../build/resource.d.coedit has been successfully compiled</div>
<svg style="left:1175.5px;top:694px" width="16" height="16" viewBox="-8 -8 16 16"><path d="M-4.3 2.15L0 -2.15L4.3 2.15" stroke="#858080" stroke-width="1.5" fill="none"/></svg>
<svg style="left:1175.5px;top:796px" width="16" height="16" viewBox="-8 -8 16 16"><path d="M-4.3 2.15L0 -2.15L4.3 2.15" stroke="#858080" stroke-width="1.5" fill="none"/></svg>
<svg style="left:1175.5px;top:808.5px" width="16" height="16" viewBox="-8 -8 16 16"><path d="M-4.3 -2.15L0 2.15L4.3 -2.15" stroke="#858080" stroke-width="1.5" fill="none"/></svg>
<div class="sbt" style="left:1177px;top:709px;width:13px;height:88px;"></div>
<div class="sbh" style="left:1177px;top:709px;width:13px;height:88px;"></div>
<svg style="left:419px;top:822.0px" width="16" height="16" viewBox="-8 -8 16 16"><path d="M2.15 -4.3L-2.15 0L2.15 4.3" stroke="#858080" stroke-width="1.5" fill="none"/></svg>
<svg style="left:1148.5px;top:822.0px" width="16" height="16" viewBox="-8 -8 16 16"><path d="M2.15 -4.3L-2.15 0L2.15 4.3" stroke="#858080" stroke-width="1.5" fill="none"/></svg>
<svg style="left:1160.5px;top:822.0px" width="16" height="16" viewBox="-8 -8 16 16"><path d="M-2.15 -4.3L2.15 0L-2.15 4.3" stroke="#858080" stroke-width="1.5" fill="none"/></svg>
<div class="sbt" style="left:434px;top:823.5px;width:715px;height:13.0px;"></div>
<div class="sbhh" style="left:434px;top:823.5px;width:715px;height:13.0px;"></div>
<div class="dots" style="left:420px;top:850.0px;width:338.5px"></div>
<div class="dots" style="left:843.5px;top:850.0px;width:339.5px"></div>
<div class="hd" style="left:740.5px;width:121px;top:845.0px">Process input</div>
<svg style="left:1183px;top:848.0px" width="10" height="10" viewBox="0 0 10 10"><path d="M1.5 1.5L8.5 8.5M8.5 1.5L1.5 8.5" stroke="#000" stroke-width="2.2" fill="none"/></svg>
<div class="" style="left:421px;top:865px;width:769px;height:21px;background:#dcdcdc;border:1px solid #c8c8c8;border-top-color:#b4b4b4;border-radius:3px"></div>
<div class="t" style="left:424px;top:866.0px;">no process</div>
<div class="inp" style="left:425px;top:891px;width:683px;height:29px;"></div>
<div class="btn" style="left:1117px;top:893px;width:71px;height:25px;"></div>
<div class="t" style="left:1137px;top:897.0px;">Send</div>
<div class="dots" style="left:1199px;top:49.0px;width:117.75px"></div>
<div class="dots" style="left:1421.25px;top:49.0px;width:115.75px"></div>
<div class="hd" style="left:1298.75px;width:140.5px;top:44.0px">Project inspector</div>
<svg style="left:1537.5px;top:47.0px" width="10" height="10" viewBox="0 0 10 10"><path d="M1.5 1.5L8.5 8.5M8.5 1.5L1.5 8.5" stroke="#000" stroke-width="2.2" fill="none"/></svg>
<div class="btn" style="left:1202.5px;top:64.5px;width:23.0px;height:19.0px;"></div>
<div class="btn" style="left:1230.5px;top:64.5px;width:23.0px;height:19.0px;"></div>
<div class="btn" style="left:1258.5px;top:64.5px;width:23.0px;height:19.0px;"></div>
<div class="btn" style="left:1286.5px;top:64.5px;width:23.0px;height:19.0px;"></div>
<div class="inp" style="left:1315px;top:62px;width:195px;height:20px;"></div>
<div class="white" style="left:1201px;top:89px;width:345px;height:261px;"></div>
<div class="t" style="left:1226.5px;top:89.5px;">Source files</div>
<div class="t" style="left:1241.5px;top:105.5px;">../src/resource.d</div>
<div class="" style="left:1213px;top:114.0px;width:7px;height:1.0px;border-top:1px dotted #8fc08a"></div>
<div class="sel" style="left:1238px;top:122.0px;width:80px;height:15.0px;"></div>
<div class="t" style="left:1241.5px;top:121.5px;">../src/item.d</div>
<div class="" style="left:1213px;top:130.0px;width:7px;height:1.0px;border-top:1px dotted #8fc08a"></div>
<div class="t" style="left:1241.5px;top:137.5px;">../src/utils.d</div>
<div class="" style="left:1213px;top:146.0px;width:7px;height:1.0px;border-top:1px dotted #8fc08a"></div>
<div class="t" style="left:1241.5px;top:153.5px;">../src/e7F.d</div>
<div class="" style="left:1213px;top:162.0px;width:7px;height:1.0px;border-top:1px dotted #8fc08a"></div>
<div class="t" style="left:1241.5px;top:169.5px;">../src/z85.d</div>
<div class="" style="left:1213px;top:178.0px;width:7px;height:1.0px;border-top:1px dotted #8fc08a"></div>
<div class="t" style="left:1226.5px;top:185.5px;">Configurations</div>
<div class="t" style="left:1241.5px;top:201.5px;">debug</div>
<div class="" style="left:1213px;top:210.0px;width:7px;height:1.0px;border-top:1px dotted #8fc08a"></div>
<div class="t" style="left:1241.5px;top:217.5px;">release</div>
<div class="" style="left:1213px;top:226.0px;width:7px;height:1.0px;border-top:1px dotted #8fc08a"></div>
<div class="t" style="left:1241.5px;top:233.5px;">debug-redirected (active)</div>
<div class="" style="left:1213px;top:242.0px;width:7px;height:1.0px;border-top:1px dotted #8fc08a"></div>
<div class="t" style="left:1226.5px;top:249.5px;">Imports</div>
<div class="t" style="left:1226.5px;top:265.5px;">Includes</div>
<div class="t" style="left:1226.5px;top:281.5px;">Extra sources</div>
<div class="" style="left:1212px;top:106px;width:1px;height:72px;border-left:1px dotted #8fc08a"></div>
<div class="" style="left:1212px;top:202px;width:1px;height:40px;border-left:1px dotted #8fc08a"></div>
<div class="dots" style="left:1199px;top:363.0px;width:117.75px"></div>
<div class="dots" style="left:1420.25px;top:363.0px;width:116.75px"></div>
<div class="hd" style="left:1298.75px;width:139.5px;top:358.0px">Library manager</div>
<svg style="left:1537.5px;top:361.0px" width="10" height="10" viewBox="0 0 10 10"><path d="M1.5 1.5L8.5 8.5M8.5 1.5L1.5 8.5" stroke="#000" stroke-width="2.2" fill="none"/></svg>
<div class="btn" style="left:1204.5px;top:381px;width:23.0px;height:18.5px;"></div>
<div class="btn" style="left:1232.5px;top:381px;width:23.0px;height:18.5px;"></div>
<div class="btn" style="left:1260.5px;top:381px;width:23.0px;height:18.5px;"></div>
<div class="btn" style="left:1288.5px;top:381px;width:23.0px;height:18.5px;"></div>
<div class="btn" style="left:1463.5px;top:381px;width:23.0px;height:18.5px;"></div>
<div class="btn" style="left:1491.5px;top:381px;width:23.0px;height:18.5px;"></div>
<div class="btn" style="left:1519.5px;top:381px;width:23.0px;height:18.5px;"></div>
<div class="white" style="left:1203px;top:408px;width:325px;height:108px;overflow:hidden"></div>
<div class="" style="left:1204px;top:409px;width:323px;height:18px;background:linear-gradient(#d9d7d7,#d3d1d1);border-bottom:1px solid #f4f4f4;box-shadow:inset 0 -2px 0 -1px #c4c2c2"></div>
<div class="t" style="left:1210px;top:409.5px;">Alias</div>
<div class="t" style="left:1310px;top:409.5px;">Library file</div>
<div class="" style="left:1503px;top:409px;width:20px;height:17px;overflow:hidden"><div class="t" style="left:7px;top:0.5px">So</div></div>
<div class="" style="left:1204px;top:449px;width:323px;height:20px;background:#f5f4f4"></div>
<div class="t" style="left:1210px;top:429.0px;">iz</div>
<div class="" style="left:1304px;top:427px;width:198px;height:20px;overflow:hidden"><div class="t" style="left:6px;top:2px">/home/basile/Dev/Iz/lib/iz.a</div></div>
<div class="" style="left:1503px;top:427px;width:22px;height:20px;overflow:hidden"><div class="t" style="left:7px;top:2px">/home</div></div>
<div class="" style="left:1204px;top:448px;width:323px;height:1px;border-top:1px dotted #222"></div>
<div class="t" style="left:1210px;top:450.0px;">bitset</div>
<div class="" style="left:1304px;top:448px;width:198px;height:20px;overflow:hidden"><div class="t" style="left:6px;top:2px">/home/basile/Dev/Bitset/lib/bitset.a</div></div>
<div class="" style="left:1503px;top:448px;width:22px;height:20px;overflow:hidden"><div class="t" style="left:7px;top:2px">/home</div></div>
<div class="" style="left:1204px;top:469px;width:323px;height:1px;border-top:1px dotted #222"></div>
<div class="t" style="left:1210px;top:471.0px;">phobos</div>
<div class="" style="left:1304px;top:469px;width:198px;height:20px;overflow:hidden"><div class="t" style="left:6px;top:2px">/usr/lib64/libphobos2.a</div></div>
<div class="" style="left:1503px;top:469px;width:22px;height:20px;overflow:hidden"><div class="t" style="left:7px;top:2px">/usr</div></div>
<div class="" style="left:1303px;top:428px;width:1px;height:62px;border-left:1px dotted #222"></div>
<div class="" style="left:1502px;top:428px;width:1px;height:62px;border-left:1px dotted #222"></div>
<div class="" style="left:1303px;top:413px;width:1px;height:9px;border-left:1px dotted #999"></div>
<div class="" style="left:1502px;top:413px;width:1px;height:9px;border-left:1px dotted #999"></div>
<div class="" style="left:1524px;top:413px;width:1px;height:9px;border-left:1px dotted #999"></div>
<svg style="left:1528.5px;top:405px" width="16" height="16" viewBox="-8 -8 16 16"><path d="M-4.3 2.15L0 -2.15L4.3 2.15" stroke="#858080" stroke-width="1.5" fill="none"/></svg>
<svg style="left:1528.5px;top:488px" width="16" height="16" viewBox="-8 -8 16 16"><path d="M-4.3 2.15L0 -2.15L4.3 2.15" stroke="#858080" stroke-width="1.5" fill="none"/></svg>
<svg style="left:1528.5px;top:500.5px" width="16" height="16" viewBox="-8 -8 16 16"><path d="M-4.3 -2.15L0 2.15L4.3 -2.15" stroke="#858080" stroke-width="1.5" fill="none"/></svg>
<div class="sbt" style="left:1530px;top:420px;width:13px;height:69px;"></div>
<div class="sbh" style="left:1530px;top:420px;width:13px;height:69px;"></div>
<svg style="left:1201px;top:517.5px" width="16" height="16" viewBox="-8 -8 16 16"><path d="M2.15 -4.3L-2.15 0L2.15 4.3" stroke="#858080" stroke-width="1.5" fill="none"/></svg>
<svg style="left:1501.5px;top:517.5px" width="16" height="16" viewBox="-8 -8 16 16"><path d="M2.15 -4.3L-2.15 0L2.15 4.3" stroke="#858080" stroke-width="1.5" fill="none"/></svg>
<svg style="left:1513.5px;top:517.5px" width="16" height="16" viewBox="-8 -8 16 16"><path d="M-2.15 -4.3L2.15 0L-2.15 4.3" stroke="#858080" stroke-width="1.5" fill="none"/></svg>
<div class="sbt" style="left:1216px;top:519px;width:286px;height:13px;"></div>
<div class="sbhh" style="left:1216px;top:519px;width:286px;height:13px;"></div>
<div class="dots" style="left:1199px;top:547.0px;width:105.0px"></div>
<div class="dots" style="left:1433.0px;top:547.0px;width:104.0px"></div>
<div class="hd" style="left:1286.0px;width:165px;top:542.0px">Project configuration</div>
<svg style="left:1537.5px;top:545.0px" width="10" height="10" viewBox="0 0 10 10"><path d="M1.5 1.5L8.5 8.5M8.5 1.5L1.5 8.5" stroke="#000" stroke-width="2.2" fill="none"/></svg>
<div class="" style="left:1203px;top:561px;width:251px;height:23px;background:#dcdcdc"></div>
<div class="btn" style="left:1204px;top:563px;width:247px;height:18.5px;"></div>
<div class="t" style="left:1208px;top:563.5px;">debug-redirected</div>
<svg style="left:1433px;top:565px" width="16" height="16" viewBox="-8 -8 16 16"><path d="M-4 -2.0L0 2.0L4 -2.0" stroke="#222" stroke-width="1.6" fill="none"/></svg>
<div class="btn" style="left:1458px;top:562.5px;width:24px;height:19.0px;"></div>
<div class="btn" style="left:1488px;top:562.5px;width:24px;height:19.0px;"></div>
<div class="btn" style="left:1518px;top:562.5px;width:24px;height:19.0px;"></div>
<div class="white" style="left:1203px;top:589px;width:158px;height:330px;"></div>
<div class="t" style="left:1210px;top:589.5px;">General</div>
<div class="t" style="left:1210px;top:605.5px;">Categories</div>
<div class="t" style="left:1225px;top:621.5px;">Messages</div>
<div class="" style="left:1216px;top:630.0px;width:6px;height:1.0px;border-top:1px dotted #8fc08a"></div>
<div class="t" style="left:1225px;top:637.5px;">Debugging</div>
<div class="" style="left:1216px;top:646.0px;width:6px;height:1.0px;border-top:1px dotted #8fc08a"></div>
<div class="t" style="left:1225px;top:653.5px;">Documentation</div>
<div class="" style="left:1216px;top:662.0px;width:6px;height:1.0px;border-top:1px dotted #8fc08a"></div>
<div class="t" style="left:1225px;top:669.5px;">Output</div>
<div class="" style="left:1216px;top:678.0px;width:6px;height:1.0px;border-top:1px dotted #8fc08a"></div>
<div class="t" style="left:1225px;top:685.5px;">Others</div>
<div class="" style="left:1216px;top:694.0px;width:6px;height:1.0px;border-top:1px dotted #8fc08a"></div>
<div class="sel" style="left:1222px;top:702.0px;width:38px;height:15.0px;"></div>
<div class="t" style="left:1225px;top:701.5px;">Paths</div>
<div class="" style="left:1216px;top:710.0px;width:6px;height:1.0px;border-top:1px dotted #8fc08a"></div>
<div class="t" style="left:1225px;top:717.5px;">Pre-build process</div>
<div class="" style="left:1216px;top:726.0px;width:6px;height:1.0px;border-top:1px dotted #8fc08a"></div>
<div class="t" style="left:1225px;top:733.5px;">Post-build process</div>
<div class="" style="left:1216px;top:742.0px;width:6px;height:1.0px;border-top:1px dotted #8fc08a"></div>
<div class="t" style="left:1225px;top:749.5px;">Run options</div>
<div class="" style="left:1216px;top:758.0px;width:6px;height:1.0px;border-top:1px dotted #8fc08a"></div>
<div class="t" style="left:1210px;top:765.5px;">All categories</div>
<div class="" style="left:1214px;top:622px;width:1px;height:136px;border-left:1px dotted #8fc08a"></div>
<div class="" style="left:1367px;top:589px;width:160px;height:330px;border:1px solid #d6d6d6;border-top-color:#bdbdbd;border-radius:3px;background:#e8e8e8"></div>
<div class="" style="left:1389px;top:590px;width:1px;height:328px;background:#9a9a9a"></div>
<div class="" style="left:1508px;top:590px;width:1px;height:124px;background:#9a9a9a"></div>
<div class="t" style="left:1392px;top:593.5px;">extraSources</div>
<div class="" style="left:1509px;top:590px;width:17px;height:23px;overflow:hidden"><div class="t" style="left:4px;top:3.5px">(TS</div></div>
<div class="" style="left:1390px;top:613.5px;width:136px;height:1.0px;border-top:1px dotted #aaa"></div>
<div class="t" style="left:1392px;top:618.5px;">imports</div>
<div class="" style="left:1509px;top:615px;width:17px;height:23px;overflow:hidden"><div class="t" style="left:4px;top:3.5px">(TS</div></div>
<div class="" style="left:1390px;top:638.5px;width:136px;height:1.0px;border-top:1px dotted #aaa"></div>
<div class="t" style="left:1392px;top:643.5px;">includes</div>
<div class="" style="left:1509px;top:640px;width:17px;height:23px;overflow:hidden"><div class="t" style="left:4px;top:3.5px">(TS</div></div>
<div class="" style="left:1390px;top:663.5px;width:136px;height:1.0px;border-top:1px dotted #aaa"></div>
<div class="t" style="left:1392px;top:668.5px;">objectDirectory</div>
<div class="" style="left:1509px;top:665px;width:17px;height:23px;overflow:hidden"><div class="t" style="left:4px;top:3.5px"></div></div>
<div class="" style="left:1390px;top:688.5px;width:136px;height:1.0px;border-top:1px dotted #aaa"></div>
<div class="t" style="left:1392px;top:693.5px;">outputFilename</div>
<div class="" style="left:1509px;top:690px;width:17px;height:23px;overflow:hidden"><div class="t" style="left:4px;top:3.5px">&lt;CF</div></div>
<div class="" style="left:1390px;top:713.5px;width:136px;height:1.0px;border-top:1px dotted #aaa"></div>
<svg style="left:1528.5px;top:586px" width="16" height="16" viewBox="-8 -8 16 16"><path d="M-4.3 2.15L0 -2.15L4.3 2.15" stroke="#858080" stroke-width="1.5" fill="none"/></svg>
<svg style="left:1528.5px;top:894px" width="16" height="16" viewBox="-8 -8 16 16"><path d="M-4.3 2.15L0 -2.15L4.3 2.15" stroke="#858080" stroke-width="1.5" fill="none"/></svg>
<svg style="left:1528.5px;top:906.5px" width="16" height="16" viewBox="-8 -8 16 16"><path d="M-4.3 -2.15L0 2.15L4.3 -2.15" stroke="#858080" stroke-width="1.5" fill="none"/></svg>
<div class="sbt" style="left:1530px;top:601px;width:13px;height:294px;"></div>
<div class="sbh" style="left:1530px;top:601px;width:13px;height:294px;"></div>
<div class="" style="left:0px;top:924px;width:1550px;height:3px;background:#d8d6d6"></div>
<div class="" style="left:208px;top:406px;width:1px;height:1px;background:#8a8a8a"></div>
<div class="" style="left:208px;top:650px;width:1px;height:1px;background:#8a8a8a"></div>
<div class="" style="left:168px;top:552px;width:1px;height:1px;background:#8a8a8a"></div>
<div class="" style="left:416px;top:487px;width:1px;height:1px;background:#8a8a8a"></div>
<div class="" style="left:1373px;top:355px;width:1px;height:1px;background:#8a8a8a"></div>
<div class="" style="left:1373px;top:540px;width:1px;height:1px;background:#8a8a8a"></div>
<div class="" style="left:1197px;top:484px;width:1px;height:1px;background:#8a8a8a"></div>
<div class="" style="left:1363px;top:755px;width:1px;height:1px;background:#8a8a8a"></div>
<div class="" style="left:806px;top:648px;width:1px;height:1px;background:#8a8a8a"></div>
<div class="" style="left:806px;top:843px;width:1px;height:1px;background:#8a8a8a"></div>
<div class="" style="left:775px;top:42px;width:1px;height:1px;background:#8a8a8a"></div>
<svg style="left:0;top:0" width="1550" height="927" viewBox="0 0 1550 927"><g fill="url(#gBlue)" stroke="#2f7fd0" stroke-width="0.5"><path d="M19.4 82C13.2 80.6 11.6 73.6 15.4 69.6L14 68.6L19.4 68.6L19.2 73.8L17.8 72.4C16.2 74.6 17 77.6 19.4 78.6Z"/><path d="M21.8 69C28 70.4 29.6 77.4 25.8 81.4L27.2 82.4L21.8 82.4L22 77.2L23.4 78.6C25 76.4 24.2 73.4 21.8 72.4Z"/></g><rect x="388.6" y="66.9" width="18" height="15" rx="4.2" fill="#f7f7f7" stroke="#bcbcbc" stroke-width="0.8"/><path d="M391.6 82.0H403.6" stroke="#8e8888" stroke-width="1"/><path d="M389.90000000000003 68.2H405.3V70.30000000000001L398.90000000000003 75.30000000000001V81.5H396.3V75.30000000000001L389.90000000000003 70.30000000000001Z" fill="#a2a2a2" stroke="#909090" stroke-width="0.5"/><path d="M399.50000000000006 75.5L405.3 81.30000000000001M405.3 75.5L399.50000000000006 81.30000000000001" stroke="#2a2a2a" stroke-width="2.6" stroke-dasharray="0.9 0.9" opacity="0.95"/><path d="M399.50000000000006 75.5L405.3 81.30000000000001M405.3 75.5L399.50000000000006 81.30000000000001" stroke="#555" stroke-width="1.6" opacity="0.55"/><rect x="1517.6" y="64.9" width="22.8" height="15" rx="4.2" fill="#f7f7f7" stroke="#bcbcbc" stroke-width="0.8"/><path d="M1520.6 80.0H1537.3999999999999" stroke="#8e8888" stroke-width="1"/><path d="M1521.3 66.2H1536.7V68.30000000000001L1530.3 73.30000000000001V79.5H1527.7V73.30000000000001L1521.3 68.30000000000001Z" fill="#a2a2a2" stroke="#909090" stroke-width="0.5"/><path d="M1530.8999999999999 73.5L1536.7 79.30000000000001M1536.7 73.5L1530.8999999999999 79.30000000000001" stroke="#2a2a2a" stroke-width="2.6" stroke-dasharray="0.9 0.9" opacity="0.95"/><path d="M1530.8999999999999 73.5L1536.7 79.30000000000001M1536.7 73.5L1530.8999999999999 79.30000000000001" stroke="#555" stroke-width="1.6" opacity="0.55"/><rect x="12.5" y="433.5" width="14" height="12" rx="0.8" fill="url(#gWin)" stroke="#1c7ac4" stroke-width="1.1"/><rect x="14" y="435" width="11" height="1.6" fill="#3f92d6"/><circle cx="24.5" cy="444.6" r="3.5" fill="#5cae12" stroke="#4a940a" stroke-width="0.6"/><rect x="22.2" y="443.8" width="4.6" height="1.6" fill="#fff"/><rect x="23.7" y="442.3" width="1.6" height="4.6" fill="#fff"/><rect x="40.5" y="433.5" width="14" height="12" rx="0.8" fill="url(#gWin)" stroke="#1c7ac4" stroke-width="1.1"/><rect x="42" y="435" width="11" height="1.6" fill="#3f92d6"/><circle cx="52.5" cy="444.6" r="3.5" fill="#e8483c" stroke="#cc3428" stroke-width="0.6"/><rect x="50.2" y="443.8" width="4.6" height="1.6" fill="#fff"/><path d="M72.6 434H78.0V441H81.7L75.3 448L68.89999999999999 441H72.6Z" fill="url(#gBlue)" stroke="#2b86da" stroke-width="0.8" stroke-linejoin="round"/><path d="M100.6 448H106.0V441H109.7L103.3 434L96.89999999999999 441H100.6Z" fill="url(#gBlue)" stroke="#2b86da" stroke-width="0.8" stroke-linejoin="round"/><rect x="389.0" y="433.5" width="14" height="12" rx="0.8" fill="url(#gWin)" stroke="#1c7ac4" stroke-width="1.1"/><rect x="390.5" y="435" width="11" height="1.6" fill="#3f92d6"/><path d="M400.5 438.5L396.3 444H398.9L397.5 449.5L402.5 443H399.7L401.9 438.5Z" fill="#f8b830" stroke="#d08a10" stroke-width="0.6"/><path d="M1207.5 66.5H1215.5L1219.5 70.5V80.5H1207.5Z" fill="url(#gDoc)" stroke="#b4b4b4"/><path d="M1215.5 66.5V70.5H1219.5" fill="none" stroke="#b4b4b4" stroke-width="0.8"/><circle cx="1218.5" cy="78.5" r="3.5" fill="#2f8f2f" stroke="#237523" stroke-width="0.6"/><rect x="1216.2" y="77.7" width="4.6" height="1.6" fill="#fff"/><rect x="1217.7" y="76.2" width="1.6" height="4.6" fill="#fff"/><path d="M1235.5 66.5H1243.5L1247.5 70.5V80.5H1235.5Z" fill="url(#gDoc)" stroke="#b4b4b4"/><path d="M1243.5 66.5V70.5H1247.5" fill="none" stroke="#b4b4b4" stroke-width="0.8"/><circle cx="1246.5" cy="78.5" r="3.5" fill="#e2660e" stroke="#c4520a" stroke-width="0.6"/><rect x="1244.2" y="77.7" width="4.6" height="1.6" fill="#fff"/><path d="M1262.5 77.5V66.5H1267.5L1268.5 67.5H1275.5V70" fill="url(#gFold)" stroke="#d39a3e"/><path d="M1262.5 77.5L1265 70.5H1277.5L1275.5 77.5Z" fill="url(#gFoldF)" stroke="#d39a3e" stroke-linejoin="round"/><circle cx="1274.5" cy="77.7" r="3.5" fill="#5cae12" stroke="#4a940a" stroke-width="0.6"/><rect x="1272.2" y="76.9" width="4.6" height="1.6" fill="#fff"/><rect x="1273.7" y="75.4" width="1.6" height="4.6" fill="#fff"/><path d="M1290.5 77.5V66.5H1295.5L1296.5 67.5H1303.5V70" fill="url(#gFold)" stroke="#d39a3e"/><path d="M1290.5 77.5L1293 70.5H1305.5L1303.5 77.5Z" fill="url(#gFoldF)" stroke="#d39a3e" stroke-linejoin="round"/><circle cx="1302.5" cy="77.7" r="3.5" fill="#e8483c" stroke="#cc3428" stroke-width="0.6"/><rect x="1300.2" y="76.9" width="4.6" height="1.6" fill="#fff"/><rect x="1208.5" y="382.5" width="12" height="13" rx="0.8" fill="url(#gBook)" stroke="#1b64b6"/><path d="M1210 383V395" stroke="#9ccaf4" stroke-width="0.8"/><rect x="1212.5" y="385.2" width="5.5" height="1.3" fill="#fff"/><rect x="1212.5" y="388" width="5.5" height="1.3" fill="#fff"/><circle cx="1220.5" cy="393.5" r="3.5" fill="#5cae12" stroke="#4a940a" stroke-width="0.6"/><rect x="1218.2" y="392.7" width="4.6" height="1.6" fill="#fff"/><rect x="1219.7" y="391.2" width="1.6" height="4.6" fill="#fff"/><rect x="1236.5" y="382.5" width="12" height="13" rx="0.8" fill="url(#gBook)" stroke="#1b64b6"/><path d="M1238 383V395" stroke="#9ccaf4" stroke-width="0.8"/><rect x="1240.5" y="385.2" width="5.5" height="1.3" fill="#fff"/><rect x="1240.5" y="388" width="5.5" height="1.3" fill="#fff"/><circle cx="1248.5" cy="393.5" r="3.5" fill="#e8483c" stroke="#cc3428" stroke-width="0.6"/><rect x="1246.2" y="392.7" width="4.6" height="1.6" fill="#fff"/><path d="M1268.6 383H1274.0V390H1277.7L1271.3 397L1264.8999999999999 390H1268.6Z" fill="url(#gBlue)" stroke="#2b86da" stroke-width="0.8" stroke-linejoin="round"/><path d="M1296.6 397H1302.0V390H1305.7L1299.3 383L1292.8999999999999 390H1296.6Z" fill="url(#gBlue)" stroke="#2b86da" stroke-width="0.8" stroke-linejoin="round"/><rect x="1468.5" y="382.5" width="12" height="15" rx="0.8" fill="#4a78b8" stroke="#2c539c"/><path d="M1470 383V397" stroke="#9ccaf4" stroke-width="0.8"/><rect x="1472.5" y="385.2" width="5.5" height="1.3" fill="#fff"/><rect x="1472.5" y="388" width="5.5" height="1.3" fill="#fff"/><path d="M1471.5 397.5L1472.6 393.6L1480.4 386.4L1483 389L1475.4 396.4Z" fill="#f6cf38" stroke="#c8901a" stroke-width="0.7"/><path d="M1471.5 397.5L1472.6 393.6L1475.4 396.4Z" fill="#f0c8a0" stroke="#a86820" stroke-width="0.5"/><path d="M1495.5 393.5V382.5H1500.5L1501.5 383.5H1508.5V386" fill="url(#gFold)" stroke="#d39a3e"/><path d="M1495.5 393.5L1498 386.5H1510.5L1508.5 393.5Z" fill="url(#gFoldF)" stroke="#d39a3e" stroke-linejoin="round"/><path d="M1500.5 391.5L1506 388.5L1511.5 391.5V395.5L1506 398.5L1500.5 395.5Z" fill="#4aa0ea" stroke="#3a88d4" stroke-width="0.7"/><path d="M1500.5 391.5L1506 394.2L1511.5 391.5M1506 394.2V398.5" stroke="#bfe0fa" stroke-width="0.8" fill="none"/><path d="M1523.5 393.5V382.5H1528.5L1529.5 383.5H1536.5V386" fill="url(#gFold)" stroke="#d39a3e"/><path d="M1523.5 393.5L1526 386.5H1538.5L1536.5 393.5Z" fill="url(#gFoldF)" stroke="#d39a3e" stroke-linejoin="round"/><circle cx="1535.5" cy="394" r="3.5" fill="#5cae12" stroke="#4a940a" stroke-width="0.6"/><rect x="1533.2" y="393.2" width="4.6" height="1.6" fill="#fff"/><rect x="1534.7" y="391.7" width="1.6" height="4.6" fill="#fff"/><path d="M1468.51 564.17 L1470.49 564.17 L1470.59 566.44 L1472.31 567.15 L1473.99 565.62 L1475.38 567.01 L1473.85 568.69 L1474.56 570.41 L1476.83 570.51 L1476.83 572.49 L1474.56 572.59 L1473.85 574.31 L1475.38 575.99 L1473.99 577.38 L1472.31 575.85 L1470.59 576.56 L1470.49 578.83 L1468.51 578.83 L1468.41 576.56 L1466.69 575.85 L1465.01 577.38 L1463.62 575.99 L1465.15 574.31 L1464.44 572.59 L1462.17 572.49 L1462.17 570.51 L1464.44 570.41 L1465.15 568.69 L1463.62 567.01 L1465.01 565.62 L1466.69 567.15 L1468.41 566.44Z" fill="#bcc0c4" stroke="#888c90" stroke-width="0.8" stroke-linejoin="round"/><circle cx="1469.5" cy="571.5" r="2.4" fill="#f2f2f2" stroke="#888c90" stroke-width="0.8"/><circle cx="1474.8" cy="575.7" r="3.5" fill="#5cae12" stroke="#4a940a" stroke-width="0.6"/><rect x="1472.5" y="574.9000000000001" width="4.6" height="1.6" fill="#fff"/><rect x="1474.0" y="573.4000000000001" width="1.6" height="4.6" fill="#fff"/><path d="M1498.51 564.17 L1500.49 564.17 L1500.59 566.44 L1502.31 567.15 L1503.99 565.62 L1505.38 567.01 L1503.85 568.69 L1504.56 570.41 L1506.83 570.51 L1506.83 572.49 L1504.56 572.59 L1503.85 574.31 L1505.38 575.99 L1503.99 577.38 L1502.31 575.85 L1500.59 576.56 L1500.49 578.83 L1498.51 578.83 L1498.41 576.56 L1496.69 575.85 L1495.01 577.38 L1493.62 575.99 L1495.15 574.31 L1494.44 572.59 L1492.17 572.49 L1492.17 570.51 L1494.44 570.41 L1495.15 568.69 L1493.62 567.01 L1495.01 565.62 L1496.69 567.15 L1498.41 566.44Z" fill="#bcc0c4" stroke="#888c90" stroke-width="0.8" stroke-linejoin="round"/><circle cx="1499.5" cy="571.5" r="2.4" fill="#f2f2f2" stroke="#888c90" stroke-width="0.8"/><circle cx="1504.8" cy="575.7" r="3.5" fill="#e8483c" stroke="#cc3428" stroke-width="0.6"/><rect x="1502.5" y="574.9000000000001" width="4.6" height="1.6" fill="#fff"/><path d="M1528.51 564.17 L1530.49 564.17 L1530.59 566.44 L1532.31 567.15 L1533.99 565.62 L1535.38 567.01 L1533.85 568.69 L1534.56 570.41 L1536.83 570.51 L1536.83 572.49 L1534.56 572.59 L1533.85 574.31 L1535.38 575.99 L1533.99 577.38 L1532.31 575.85 L1530.59 576.56 L1530.49 578.83 L1528.51 578.83 L1528.41 576.56 L1526.69 575.85 L1525.01 577.38 L1523.62 575.99 L1525.15 574.31 L1524.44 572.59 L1522.17 572.49 L1522.17 570.51 L1524.44 570.41 L1525.15 568.69 L1523.62 567.01 L1525.01 565.62 L1526.69 567.15 L1528.41 566.44Z" fill="#bcc0c4" stroke="#888c90" stroke-width="0.8" stroke-linejoin="round"/><circle cx="1529.5" cy="571.5" r="2.4" fill="#f2f2f2" stroke="#888c90" stroke-width="0.8"/><path d="M1528.7 572.8H1532.7V570.4L1537.8 574.5L1532.7 578.6V576.2H1528.7Z" fill="url(#gGreenA)" stroke="#3f8a00" stroke-width="0.9" stroke-linejoin="round"/><path d="M1206.5 90.5H1210.5L1214.5 94.5V101.0H1206.5Z" fill="#fff" stroke="#a8a8a8"/><path d="M1210.5 90.5V94.5H1214.5" fill="none" stroke="#a8a8a8" stroke-width="0.8"/><path d="M1209.7 92.3H1213.7L1217.7 96.3V102.8H1209.7Z" fill="#fff" stroke="#a8a8a8"/><path d="M1213.7 92.3V96.3H1217.7" fill="none" stroke="#a8a8a8" stroke-width="0.8"/><path d="M1212.9 93.7H1217.3000000000002L1221.3000000000002 97.7V104.3H1212.9Z" fill="url(#gDoc)" stroke="#a0a0a0"/><path d="M1217.3000000000002 93.7V97.7H1221.3000000000002" fill="none" stroke="#a0a0a0" stroke-width="0.8"/><path d="M1222.8 106.7H1231.3L1235.3 110.7V121.3H1222.8Z" fill="#fff" stroke="#c2c2c2"/><path d="M1231.3 106.7V110.7H1235.3" fill="none" stroke="#c2c2c2" stroke-width="0.8"/><path d="M1225.3 110.7H1230.8" stroke="#8a8a8a" stroke-width="0.9"/><path d="M1225.3 112.7H1232.8" stroke="#8a8a8a" stroke-width="0.9"/><path d="M1225.3 114.7H1232.8" stroke="#8a8a8a" stroke-width="0.9"/><path d="M1225.3 116.7H1232.8" stroke="#8a8a8a" stroke-width="0.9"/><path d="M1225.3 118.7H1232.8" stroke="#8a8a8a" stroke-width="0.9"/><path d="M1222.8 122.7H1231.3L1235.3 126.7V137.3H1222.8Z" fill="#fff" stroke="#c2c2c2"/><path d="M1231.3 122.7V126.7H1235.3" fill="none" stroke="#c2c2c2" stroke-width="0.8"/><path d="M1225.3 126.7H1230.8" stroke="#8a8a8a" stroke-width="0.9"/><path d="M1225.3 128.7H1232.8" stroke="#8a8a8a" stroke-width="0.9"/><path d="M1225.3 130.7H1232.8" stroke="#8a8a8a" stroke-width="0.9"/><path d="M1225.3 132.7H1232.8" stroke="#8a8a8a" stroke-width="0.9"/><path d="M1225.3 134.7H1232.8" stroke="#8a8a8a" stroke-width="0.9"/><path d="M1222.8 138.7H1231.3L1235.3 142.7V153.29999999999998H1222.8Z" fill="#fff" stroke="#c2c2c2"/><path d="M1231.3 138.7V142.7H1235.3" fill="none" stroke="#c2c2c2" stroke-width="0.8"/><path d="M1225.3 142.7H1230.8" stroke="#8a8a8a" stroke-width="0.9"/><path d="M1225.3 144.7H1232.8" stroke="#8a8a8a" stroke-width="0.9"/><path d="M1225.3 146.7H1232.8" stroke="#8a8a8a" stroke-width="0.9"/><path d="M1225.3 148.7H1232.8" stroke="#8a8a8a" stroke-width="0.9"/><path d="M1225.3 150.7H1232.8" stroke="#8a8a8a" stroke-width="0.9"/><path d="M1222.8 154.7H1231.3L1235.3 158.7V169.29999999999998H1222.8Z" fill="#fff" stroke="#c2c2c2"/><path d="M1231.3 154.7V158.7H1235.3" fill="none" stroke="#c2c2c2" stroke-width="0.8"/><path d="M1225.3 158.7H1230.8" stroke="#8a8a8a" stroke-width="0.9"/><path d="M1225.3 160.7H1232.8" stroke="#8a8a8a" stroke-width="0.9"/><path d="M1225.3 162.7H1232.8" stroke="#8a8a8a" stroke-width="0.9"/><path d="M1225.3 164.7H1232.8" stroke="#8a8a8a" stroke-width="0.9"/><path d="M1225.3 166.7H1232.8" stroke="#8a8a8a" stroke-width="0.9"/><path d="M1222.8 170.7H1231.3L1235.3 174.7V185.29999999999998H1222.8Z" fill="#fff" stroke="#c2c2c2"/><path d="M1231.3 170.7V174.7H1235.3" fill="none" stroke="#c2c2c2" stroke-width="0.8"/><path d="M1225.3 174.7H1230.8" stroke="#8a8a8a" stroke-width="0.9"/><path d="M1225.3 176.7H1232.8" stroke="#8a8a8a" stroke-width="0.9"/><path d="M1225.3 178.7H1232.8" stroke="#8a8a8a" stroke-width="0.9"/><path d="M1225.3 180.7H1232.8" stroke="#8a8a8a" stroke-width="0.9"/><path d="M1225.3 182.7H1232.8" stroke="#8a8a8a" stroke-width="0.9"/><path d="M1208.3 199.1L1215 192.7" stroke="#4f86e0" stroke-width="5.2" stroke-linecap="round"/><path d="M1208.3 199.1L1215 192.7" stroke="#86aef0" stroke-width="3.2" stroke-linecap="round"/><path d="M1208.6 198.7L1214.6 192.9" stroke="#b4cdf6" stroke-width="1.2" stroke-linecap="round"/><path d="M1215.2 194.1L1217.6 191.7" stroke="#a8a8a8" stroke-width="3"/><path d="M1216.4 186.7C1214.6 188.1 1214.6 191.1 1216.2 192.5C1218 193.9 1220.8 193.5 1221.8 191.1L1219.2 191.3L1217.4 189.7L1218 186.9Z" fill="#d0d0d0" stroke="#8c8c8c" stroke-width="0.8" stroke-linejoin="round"/><path d="M1231.31 206.85 L1232.69 206.85 L1232.72 208.64 L1233.86 209.12 L1235.15 207.87 L1236.13 208.85 L1234.88 210.14 L1235.36 211.28 L1237.15 211.31 L1237.15 212.69 L1235.36 212.72 L1234.88 213.86 L1236.13 215.15 L1235.15 216.13 L1233.86 214.88 L1232.72 215.36 L1232.69 217.15 L1231.31 217.15 L1231.28 215.36 L1230.14 214.88 L1228.85 216.13 L1227.87 215.15 L1229.12 213.86 L1228.64 212.72 L1226.85 212.69 L1226.85 211.31 L1228.64 211.28 L1229.12 210.14 L1227.87 208.85 L1228.85 207.87 L1230.14 209.12 L1231.28 208.64Z" fill="#c8c8c8" stroke="#6a6a6a" stroke-width="0.8" stroke-linejoin="round"/><circle cx="1232" cy="212.0" r="1.5" fill="#f2f2f2" stroke="#6a6a6a" stroke-width="0.8"/><path d="M1231.31 222.85 L1232.69 222.85 L1232.72 224.64 L1233.86 225.12 L1235.15 223.87 L1236.13 224.85 L1234.88 226.14 L1235.36 227.28 L1237.15 227.31 L1237.15 228.69 L1235.36 228.72 L1234.88 229.86 L1236.13 231.15 L1235.15 232.13 L1233.86 230.88 L1232.72 231.36 L1232.69 233.15 L1231.31 233.15 L1231.28 231.36 L1230.14 230.88 L1228.85 232.13 L1227.87 231.15 L1229.12 229.86 L1228.64 228.72 L1226.85 228.69 L1226.85 227.31 L1228.64 227.28 L1229.12 226.14 L1227.87 224.85 L1228.85 223.87 L1230.14 225.12 L1231.28 224.64Z" fill="#c8c8c8" stroke="#6a6a6a" stroke-width="0.8" stroke-linejoin="round"/><circle cx="1232" cy="228.0" r="1.5" fill="#f2f2f2" stroke="#6a6a6a" stroke-width="0.8"/><path d="M1231.31 238.85 L1232.69 238.85 L1232.72 240.64 L1233.86 241.12 L1235.15 239.87 L1236.13 240.85 L1234.88 242.14 L1235.36 243.28 L1237.15 243.31 L1237.15 244.69 L1235.36 244.72 L1234.88 245.86 L1236.13 247.15 L1235.15 248.13 L1233.86 246.88 L1232.72 247.36 L1232.69 249.15 L1231.31 249.15 L1231.28 247.36 L1230.14 246.88 L1228.85 248.13 L1227.87 247.15 L1229.12 245.86 L1228.64 244.72 L1226.85 244.69 L1226.85 243.31 L1228.64 243.28 L1229.12 242.14 L1227.87 240.85 L1228.85 239.87 L1230.14 241.12 L1231.28 240.64Z" fill="#c8c8c8" stroke="#6a6a6a" stroke-width="0.8" stroke-linejoin="round"/><circle cx="1232" cy="244.0" r="1.5" fill="#f2f2f2" stroke="#6a6a6a" stroke-width="0.8"/><path d="M1206.5 261.0V250.0H1211.5L1212.5 251.0H1219.5V253.5" fill="url(#gFold)" stroke="#d39a3e"/><path d="M1206.5 261.0L1209 254.0H1221.5L1219.5 261.0Z" fill="url(#gFoldF)" stroke="#d39a3e" stroke-linejoin="round"/><path d="M1212.5 258.3H1216.5V255.9L1221.6 260.0L1216.5 264.1V261.7H1212.5Z" fill="url(#gGreenA)" stroke="#3f8a00" stroke-width="0.9" stroke-linejoin="round"/><path d="M1206.5 277.0V266.0H1211.5L1212.5 267.0H1219.5V269.5" fill="url(#gFold)" stroke="#d39a3e"/><path d="M1206.5 277.0L1209 270.0H1221.5L1219.5 277.0Z" fill="url(#gFoldF)" stroke="#d39a3e" stroke-linejoin="round"/><path d="M1212.5 274.3H1216.5V271.9L1221.6 276.0L1216.5 280.1V277.7H1212.5Z" fill="url(#gGreenA)" stroke="#3f8a00" stroke-width="0.9" stroke-linejoin="round"/><path d="M1206.5 282.5H1210.5L1214.5 286.5V293.0H1206.5Z" fill="#fff" stroke="#a8a8a8"/><path d="M1210.5 282.5V286.5H1214.5" fill="none" stroke="#a8a8a8" stroke-width="0.8"/><path d="M1209.7 284.3H1213.7L1217.7 288.3V294.8H1209.7Z" fill="#fff" stroke="#a8a8a8"/><path d="M1213.7 284.3V288.3H1217.7" fill="none" stroke="#a8a8a8" stroke-width="0.8"/><path d="M1212.9 285.7H1217.3000000000002L1221.3000000000002 289.7V296.3H1212.9Z" fill="url(#gDoc)" stroke="#a0a0a0"/><path d="M1217.3000000000002 285.7V289.7H1221.3000000000002" fill="none" stroke="#a0a0a0" stroke-width="0.8"/><path d="M187.2 846.5H190.4V850.6H191.6V857.5H186.5V850.6H187.2Z" fill="#7693b3" stroke="#151515" stroke-width="1"/><path d="M187 853.2H191.2" stroke="#151515" stroke-width="0.9"/><path d="M188 854.4V857" stroke="#c4d6e8" stroke-width="1"/><path d="M194.6 846.5H197.8V850.6H199.0V857.5H193.9V850.6H194.6Z" fill="#7693b3" stroke="#151515" stroke-width="1"/><path d="M194.4 853.2H198.6" stroke="#151515" stroke-width="0.9"/><path d="M195.4 854.4V857" stroke="#c4d6e8" stroke-width="1"/><rect x="191.4" y="849" width="2.6" height="3" fill="#2a2a2a"/><text x="175.5" y="880.5" font-family="Liberation Serif,serif" font-style="italic" font-weight="bold" font-size="11" fill="#b8b8b8">b</text><text x="185.0" y="887.0" font-family="Liberation Serif,serif" font-style="italic" font-weight="bold" font-size="11" fill="#b8b8b8">a</text><path d="M180.0 881.0C180.5 883.5 182.0 884.0 184.5 884.0M182.7 882.1L184.7 884.0L182.7 885.9" stroke="#bcbcbc" stroke-width="1.2" fill="none"/><text x="166.5" y="908.5" font-family="Liberation Serif,serif" font-style="italic" font-weight="bold" font-size="11" fill="#b8b8b8">b</text><text x="176.0" y="915.0" font-family="Liberation Serif,serif" font-style="italic" font-weight="bold" font-size="11" fill="#b8b8b8">a</text><path d="M171.0 909.0C171.5 911.5 173.0 912.0 175.5 912.0M173.7 910.1L175.7 912.0L173.7 913.9" stroke="#bcbcbc" stroke-width="1.2" fill="none"/><path d="M441.8 675.3L437.6 680.2" stroke="#c97a34" stroke-width="2.2" stroke-linecap="round"/><path d="M433.6 678.2L439.6 683.4L438 685.2L432 680Z" fill="#e8e8ec" stroke="#6e6e78" stroke-width="0.7"/><path d="M432.2 680.2L437.8 685C437.4 687.4 435.6 689 433.4 689.6C430.4 688.6 427.6 686 426.6 682.4C428.4 681.6 430.6 681.2 432.2 680.2Z" fill="#dcb666" stroke="#b08838" stroke-width="0.7"/><path d="M433.4 682L429 684M435 683.6L431 687M436.4 685.2L433 688.6" stroke="#b89040" stroke-width="0.6"/></svg>
</body></html>
